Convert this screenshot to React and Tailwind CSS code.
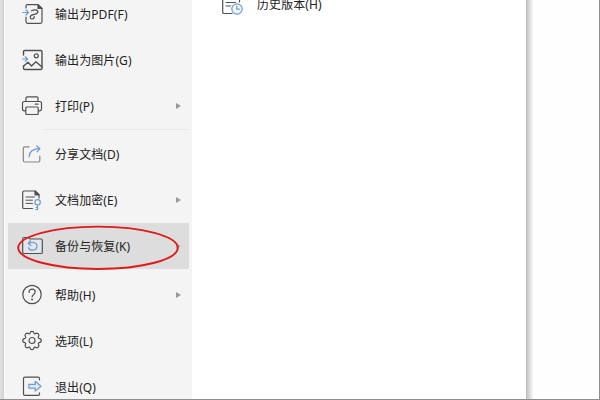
import React from "react";

const DARK = "#505050";
const BLUE = "#6f9bd1";

function Icon({ children }) {
  return (
    <svg width="22" height="22" viewBox="0 0 22 22" fill="none" stroke={DARK} strokeWidth="1.2" strokeLinecap="round" strokeLinejoin="round" className="shrink-0">
      {children}
    </svg>
  );
}

const PdfIcon = () => (
  <Icon>
    <path d="M5 5V3.2Q5 1.7 6.5 1.7H17L21 5.5V18.8Q21 20.3 19.5 20.3H6.5Q5 20.3 5 18.8V14" />
    <path d="M17 1.7V5.5H21Z" fill={DARK} />
    <path d="M10.5 7.8C13 6.5 16.8 6.3 16.8 9C16.8 12.2 9.2 10.6 9.2 14C9.2 17 13.3 16.5 13.3 13.5" />
    <path d="M1.8 9.5H7M5 7 7.5 9.5 5 12" stroke={BLUE} />
  </Icon>
);

const ImageIcon = () => (
  <Icon>
    <path d="M2.5 6V2.8Q2.5 1.5 3.8 1.5H19.7Q21 1.5 21 2.8V19.2Q21 20.5 19.7 20.5H3.8Q2.5 20.5 2.5 19.2V17" strokeWidth="1.4" />
    <circle cx="15.3" cy="6.8" r="2" />
    <path d="M2.7 17 7 13.3 10.5 17 15 12.7 21 18" strokeWidth="1.4" />
    <path d="M1.5 10H6M4.2 7.6 6.6 10 4.2 12.4" stroke={BLUE} />
  </Icon>
);

const PrintIcon = () => (
  <Icon>
    <path d="M5 6.5V3Q5 1.8 6.2 1.8H15.8Q17 1.8 17 3V6.5" />
    <path d="M4.5 15.8H3.2Q1.5 15.8 1.5 14.1V8.2Q1.5 6.5 3.2 6.5H18.8Q20.5 6.5 20.5 8.2V14.1Q20.5 15.8 18.8 15.8H17.5" />
    <rect x="4.8" y="12" width="12.4" height="7.5" rx="1" />
    <path d="M14.3 9.2H17" />
  </Icon>
);

const ShareIcon = () => (
  <Icon>
    <path d="M8 3.8H3.8Q2.3 3.8 2.3 5.3V17.5Q2.3 19 3.8 19H17.3Q18.8 19 18.8 17.5V13" stroke="#858585" />
    <path d="M8 13.8C8.4 8.8 12.2 5.7 18.7 5.7M15.8 3 19 5.7 16 8.9" stroke={BLUE} />
  </Icon>
);

const EncryptIcon = () => (
  <Icon>
    <path d="M11.5 19.5H3Q1.7 19.5 1.7 18.2V3.3Q1.7 2 3 2H14L18 5.8V9" />
    <path d="M14 2V5.8H18Z" fill={DARK} />
    <path d="M5 8H13.5M5 11.2H11.5M5 14.4H11.5" strokeWidth="1" />
    <g stroke={BLUE}>
      <circle cx="16.6" cy="13.3" r="2.7" />
      <path d="M16.6 16V20.7M16.6 20.5H14.8M16.6 18.4H15.2" />
    </g>
  </Icon>
);

const BackupIcon = () => (
  <Icon>
    <path d="M1.7 3.7Q1.7 2.5 3 2.5H7.2L9.2 4H20Q21.3 4 21.3 5.3V17.2Q21.3 18.5 20 18.5H3Q1.7 18.5 1.7 17.2Z" fill="#e4e7ec" />
    <path d="M8 8.2C11.5 6.7 16 7.5 16 11.2C16 16.2 8.3 16.2 7.4 12.5M9.4 5.7 7.2 8.4 9.8 10.5" stroke={BLUE} />
  </Icon>
);

const HelpIcon = () => (
  <Icon>
    <circle cx="11" cy="10.5" r="9.2" />
    <path d="M8 8.5C8 3.8 14.2 4.3 14.2 8.1C14.2 10.5 11.1 10.5 11.1 13" />
    <circle cx="11.1" cy="15.5" r="0.4" fill={DARK} />
  </Icon>
);

const GearIcon = () => (
  <Icon>
    <path d="M9 3.2Q9.3 1.4 11 1.4T13 3.2Q13.3 4.2 14.3 3.8Q16 2.6 17.3 3.9T17.4 6.8Q16.9 7.8 18 8.3Q20.3 8.6 20.3 10.5T18 12.7Q16.9 13.2 17.4 14.2Q18.6 15.8 17.3 17.1T14.3 17.2Q13.3 16.8 13 17.8Q12.7 19.6 11 19.6T9 17.8Q8.7 16.8 7.7 17.2Q6 18.4 4.7 17.1T4.6 14.2Q5.1 13.2 4 12.7Q1.7 12.4 1.7 10.5T4 8.3Q5.1 7.8 4.6 6.8Q3.4 5.2 4.7 3.9T7.7 3.8Q8.7 4.2 9 3.2Z" />
    <circle cx="11" cy="10.5" r="3" />
  </Icon>
);

const ExitIcon = () => (
  <Icon>
    <path d="M18.5 3.8V2.6Q18.5 1.2 17.1 1.2H4Q2.5 1.2 2.5 2.6V17.9Q2.5 19.3 4 19.3H17.1Q18.5 19.3 18.5 17.9V16.8" />
    <path d="M7.8 8.4H14.2V5.3L20 10.2 14.2 15.1V12.1H7.8Z" stroke={BLUE} fill="#dfeaf7" />
  </Icon>
);

const HistoryIcon = () => (
  <Icon>
    <path d="M11 20.5H3Q1.7 20.5 1.7 19.2V2H18.5V9" />
    <path d="M5 9.5H14.5M5 13H9.5" strokeWidth="1" />
    <circle cx="16" cy="16" r="5.2" stroke={BLUE} fill="#f1f6fc" />
    <path d="M15.8 13V16.2H18.4" stroke={BLUE} />
  </Icon>
);

function Row({ icon, label, arrow, active }) {
  return (
    <div className={`flex h-[46px] shrink-0 items-center pl-[13px] ${active ? "bg-[#dddddd]" : ""}`}>
      {icon}
      <span className="ml-[12px] pt-[2px] whitespace-nowrap">{label}</span>
      {arrow && <span className={`mr-[8px] ml-auto h-0 w-0 border-y-[3.5px] border-l-[5px] border-y-transparent ${active ? "border-l-[#b5b5b5]" : "border-l-[#999999]"}`} />}
    </div>
  );
}

export default function App() {
  return (
    <div className="relative flex h-[400px] w-[600px] overflow-hidden border-r border-b border-[#8e8e8e] bg-[#fefefe] font-['Noto_Sans','Noto_Sans_CJK_SC',sans-serif] text-[12px] leading-[18px] tracking-[0.08px] text-[#222222]">
      <div className="w-[4px] shrink-0 bg-linear-to-r from-[#e2e2e2] to-[#cfcfcf]" />
      <div className="w-px shrink-0 bg-[#fafafa]" />
      <nav className="flex w-[187px] shrink-0 flex-col bg-[#f4f4f4] pr-[3px] pl-[3px]">
        <div className="-mt-[9px] flex flex-col">
          <Row icon={<PdfIcon />} label="输出为PDF(F)" />
          <Row icon={<ImageIcon />} label="输出为图片(G)" />
          <Row icon={<PrintIcon />} label="打印(P)" arrow />
          <div className="ml-[35px] h-[2px] border-t border-[#e9e9e9]" />
          <Row icon={<ShareIcon />} label="分享文档(D)" />
          <Row icon={<EncryptIcon />} label="文档加密(E)" arrow />
          <Row icon={<BackupIcon />} label="备份与恢复(K)" arrow active />
          <div className="h-[3px]" />
          <Row icon={<HelpIcon />} label="帮助(H)" arrow />
          <Row icon={<GearIcon />} label="选项(L)" />
          <Row icon={<ExitIcon />} label="退出(Q)" />
        </div>
      </nav>
      <main className="w-[334px] shrink-0 bg-white">
        <div className="-mt-[19px] flex h-[46px] items-center pl-[29px]">
          <HistoryIcon />
          <span className="ml-[14px] pt-[2px] whitespace-nowrap">历史版本(H)</span>
        </div>
      </main>
      <div className="w-[7px] shrink-0 bg-linear-to-r from-[#bdbdbd] to-[#f8f8f8]" />
      <svg className="absolute top-[224px] left-[16px]" width="166" height="48" viewBox="0 0 166 48" fill="none">
        <ellipse cx="82" cy="23.8" rx="79.8" ry="21.2" stroke="#e01a1a" strokeWidth="1.9" />
      </svg>
    </div>
  );
}
